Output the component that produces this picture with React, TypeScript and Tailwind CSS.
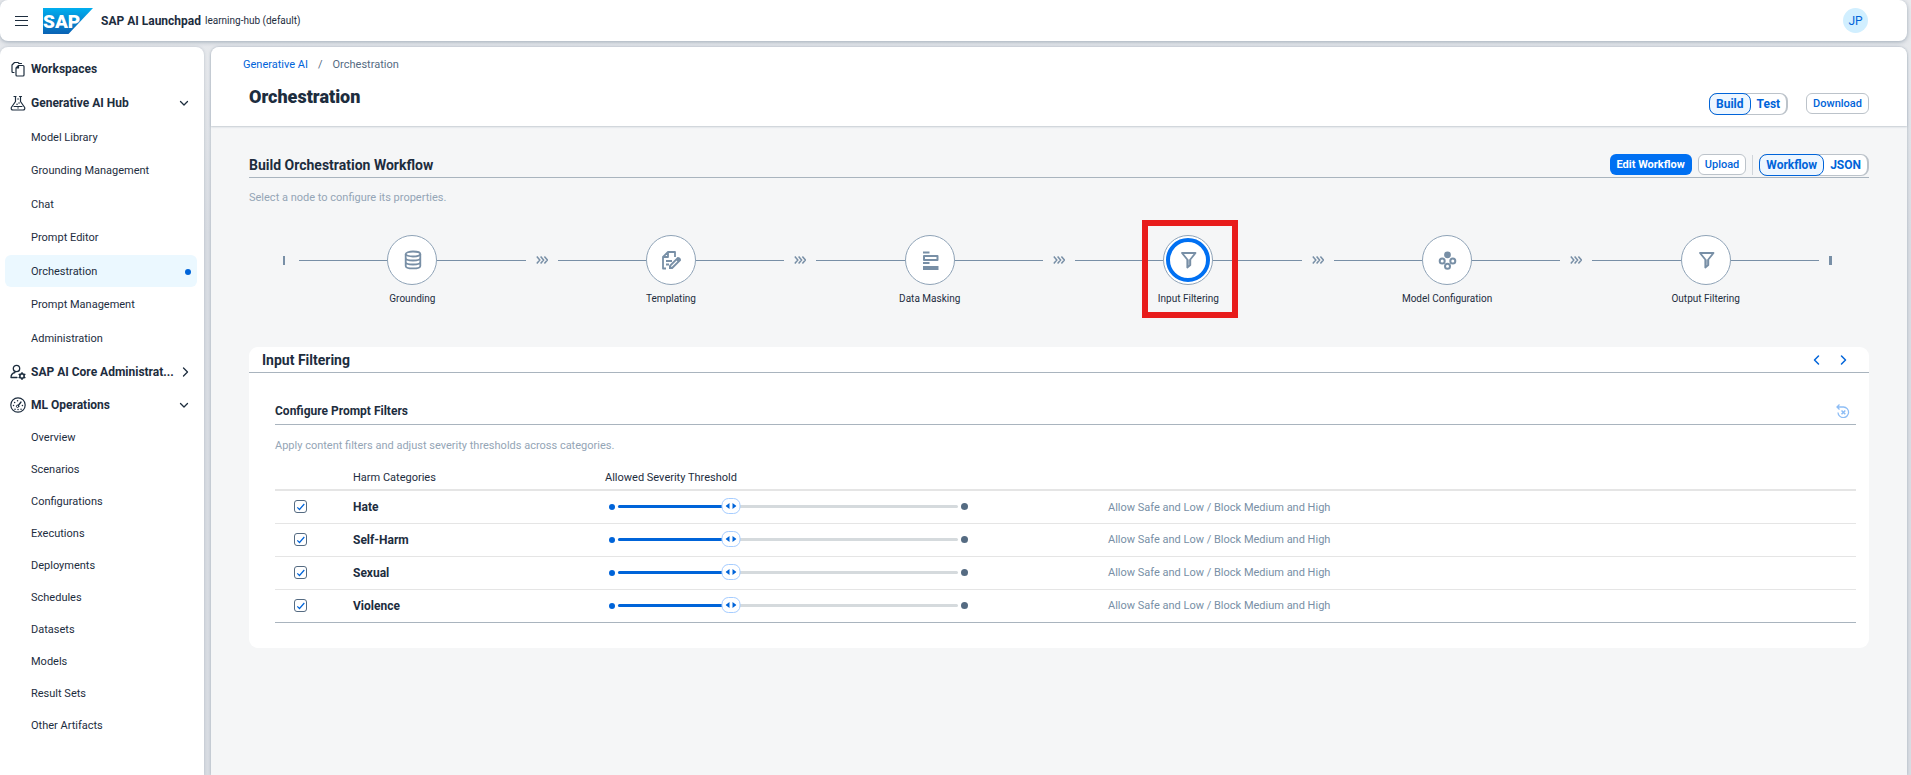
import { useState, type ReactNode } from "react";

const CORE_ITEMS = [
  "Model Library",
  "Grounding Management",
  "Chat",
  "Prompt Editor",
  "Orchestration",
  "Prompt Management",
  "Administration",
];

const ML_ITEMS = [
  "Overview",
  "Scenarios",
  "Configurations",
  "Executions",
  "Deployments",
  "Schedules",
  "Datasets",
  "Models",
  "Result Sets",
  "Other Artifacts",
];

const CATEGORIES = ["Hate", "Self-Harm", "Sexual", "Violence"];

function Chevron({ dir, className }: { dir: "down" | "left" | "right"; className?: string }) {
  const d = dir === "down" ? "M2.5 4.5 6 8l3.5-3.5" : dir === "left" ? "M7.5 2 3.500 6l4 4" : "M4.500 2 8.500 6l-4 4";
  return (
    <svg viewBox="0 0 12 12" className={className} fill="none" stroke="currentColor" strokeLinecap="round" strokeLinejoin="round">
      <path d={d} />
    </svg>
  );
}

function SapLogo() {
  return (
    <svg viewBox="0 0 50 26" className="h-[26px] w-[50px]" role="img" aria-label="SAP">
      <defs>
        <linearGradient id="sap" x1="0" y1="0" x2="0" y2="1">
          <stop offset="0" stopColor="#00aeef" />
          <stop offset="1" stopColor="#0a62b4" />
        </linearGradient>
      </defs>
      <path d="M0 0h50L25.500 26H0z" fill="url(#sap)" />
      <text x="0" y="20" fontFamily="Roboto" fontWeight="900" fontSize="19" fill="#fff">
        SAP
      </text>
    </svg>
  );
}

function IconBase({ children }: { children: ReactNode }) {
  return (
    <svg viewBox="0 0 16 16" className="h-4 w-4 shrink-0" fill="none" stroke="currentColor" strokeLinecap="round" strokeLinejoin="round">
      {children}
    </svg>
  );
}

const WorkspacesIcon = () => (
  <IconBase>
    <path d="M4 11.500H3Q2 11.500 2 10.500V4L4.500 1.500H8Q9 1.500 9 2.500" strokeWidth="1.200" />
    <path d="M6 7 8.500 4.500H13Q14 4.500 14 5.500V14Q14 15 13 15H7Q6 15 6 14zM6 7H8.500V4.500M9 2.500H11.500" strokeWidth="1.200" />
  </IconBase>
);

const FlaskIcon = () => (
  <IconBase>
    <path d="M4 1.500H6M9.500 1.500H11.500M5.500 1.500V6.500L1.300 12.500Q.8 15 3 15H13Q15.200 15 14.700 12.500L10.500 6.500V1.500M4 11.500H12" strokeWidth="1.200" />
    <path d="M7 9.200h.1M9 8h.1M8 4h.1M8 12.900h.1" strokeWidth="1.400" />
  </IconBase>
);

const AdminIcon = () => (
  <IconBase>
    <circle cx="6.500" cy="4.500" r="3.200" strokeWidth="1.300" />
    <path d="M7 13.500H1Q1 9.500 5 8.500" strokeWidth="1.300" />
    <circle cx="12" cy="12" r="2.200" strokeWidth="1.400" />
    <path d="M12 8.700v1M12 14.300v1M9.200 10.400l.8.500M14 13.100l.8.500M9.200 13.600l.8-.5M14 10.900l.8-.5" strokeWidth="1.500" />
  </IconBase>
);

const GaugeIcon = () => (
  <IconBase>
    <circle cx="8" cy="8" r="7.200" strokeWidth="1.200" />
    <path d="M8.300 8.500 11 5" strokeWidth="1.300" />
    <circle cx="7.600" cy="9.300" r="1.200" />
    <path d="M3.500 8.500h.1M4.600 5.500h.1M7.500 3.800h.1M12.400 8.500h.1M5 12.200h.1M8 12.500h.1M11 12.200h.1" strokeWidth="1.400" />
  </IconBase>
);

function NavHeading({ icon, label, dir }: { icon: ReactNode; label: string; dir?: "down" | "right" }) {
  return (
    <button type="button" className="flex h-8 w-full items-center gap-[5px] pr-[14px] pl-[10px] text-left text-xs font-bold whitespace-nowrap">
      {icon}
      <span className="flex-1">{label}</span>
      {dir && <Chevron dir={dir} className="h-3 w-3 shrink-0 stroke-[1.3]" />}
    </button>
  );
}

function NavItem({ label, active }: { label: string; active?: boolean }) {
  return (
    <li>
      <a
        href="#"
        aria-current={active ? "page" : undefined}
        className={
          active
            ? "mr-[7px] ml-[5px] flex h-8 items-center justify-between rounded-md bg-[#ebf8ff] pt-px pr-[6px] pl-[26px] text-[11px] leading-[18px]"
            : "mr-[7px] ml-[5px] flex h-8 items-center justify-between rounded-md pt-px pr-[6px] pl-[26px] text-[11px] leading-[18px]"
        }
      >
        {label}
        {active && <span className="h-[6px] w-[6px] rounded-full bg-[#0064d9]" />}
      </a>
    </li>
  );
}

function Segmented({ options, value, onChange }: { options: string[]; value: string; onChange: (v: string) => void }) {
  return (
    <div className="flex h-[22px] rounded-lg border border-r-2 border-[#bcc3ca] bg-white text-xs font-bold">
      {options.map((o) => (
        <button
          key={o}
          type="button"
          aria-pressed={o === value}
          onClick={() => onChange(o)}
          className={
            o === value
              ? "-my-px -ml-px rounded-lg border border-[#0064d9] bg-[#edf6ff] px-[6px] text-[#0064d9]"
              : "px-[6px] text-[#0064d9]"
          }
        >
          {o}
        </button>
      ))}
    </div>
  );
}

const NodeSvg = ({ children }: { children: ReactNode }) => (
  <svg viewBox="0 0 20 20" className="h-5 w-5" fill="none" stroke="currentColor" strokeWidth="1.800" strokeLinejoin="round">
    {children}
  </svg>
);

const DatabaseIcon = () => (
  <NodeSvg>
    <ellipse cx="11" cy="4" rx="7.300" ry="2.500" />
    <path d="M3.700 4v12c0 3.300 14.600 3.300 14.600 0V4M3.700 8c0 3.300 14.600 3.300 14.600 0M3.700 12c0 3.300 14.600 3.300 14.600 0" />
  </NodeSvg>
);

const TemplateIcon = () => (
  <NodeSvg>
    <path d="M5 18.500H2V7L7 2h7v5M2 7h5V2M5 11h6M5 14.500h3" />
    <path d="M8 19v-3.500l8.500-8.500q3.500 0 3.500 3.500L11.500 19z" fill="currentColor" stroke="none" />
    <path d="m10.300 16.700 5.700-5.700" stroke="#fff" strokeWidth="1.100" />
  </NodeSvg>
);

const MaskIcon = () => (
  <NodeSvg>
    <path d="M3 2.500h6.500M3 13h6.500" strokeWidth="2" />
    <path d="M4 6h13.500v4H4z" strokeWidth="2" />
    <path d="M3 16h15.500v4H3z" fill="currentColor" stroke="none" />
  </NodeSvg>
);

const FunnelIcon = () => (
  <NodeSvg>
    <path d="M4 3h13.500l-5.200 6.500v5.500l-3 2.500V9.500z" strokeWidth="1.800" />
    <path d="M11 9.500v6.500" strokeWidth="1.300" />
  </NodeSvg>
);

const ModelIcon = () => (
  <NodeSvg>
    <circle cx="10.500" cy="4.800" r="3.400" fill="currentColor" stroke="none" />
    <circle cx="5.200" cy="11" r="2.500" strokeWidth="2" />
    <circle cx="15.800" cy="11" r="2.500" strokeWidth="2" />
    <circle cx="10.500" cy="16.300" r="2.500" strokeWidth="2" />
  </NodeSvg>
);

const NODES: { label: string; icon: ReactNode }[] = [
  { label: "Grounding", icon: <DatabaseIcon /> },
  { label: "Templating", icon: <TemplateIcon /> },
  { label: "Data Masking", icon: <MaskIcon /> },
  { label: "Input Filtering", icon: <FunnelIcon /> },
  { label: "Model Configuration", icon: <ModelIcon /> },
  { label: "Output Filtering", icon: <FunnelIcon /> },
];

function FlowNode({ label, icon, active }: { label: string; icon: ReactNode; active: boolean }) {
  return (
    <li className="flex flex-1 items-center">
      <span className="mt-px h-px flex-1 bg-[#788fa6]" />
      <button type="button" className="relative flex h-[50px] w-[50px] items-center justify-center rounded-full border border-[#8fa3b7] bg-white p-[2px] text-[#788fa6]">
        <span
          className={
            active
              ? "flex h-full w-full items-center justify-center rounded-full border-4 border-[#0070f2]"
              : "flex h-full w-full items-center justify-center rounded-full"
          }
        >
          {icon}
        </span>
        <span className="absolute top-full left-1/2 mt-[7px] -translate-x-1/2 text-[10px] leading-4 whitespace-nowrap text-[#1d2d3e]">{label}</span>
        {active && <span className="pointer-events-none absolute -top-4 -left-[22px] h-[98px] w-[96px] border-[6px] border-[#e81c1c]" />}
      </button>
      <span className="mt-px h-px flex-1 bg-[#788fa6]" />
    </li>
  );
}

function FlowArrow() {
  return (
    <li aria-hidden="true" className="flex w-8 justify-center text-[#788fa6]">
      <svg viewBox="0 0 12 8" className="h-2 w-3" fill="none" stroke="currentColor" strokeWidth="1.500">
        <path d="m.8.5 3 3.500-3 3.500M4.600.5l3 3.500-3 3.500M8.400.5l3 3.500-3 3.500" />
      </svg>
    </li>
  );
}

function SeveritySlider({ label }: { label: string }) {
  const [value, setValue] = useState(1);
  const share = (value / 3) * 100;
  return (
    <div className="relative ml-1 flex h-4 w-[359px] items-center gap-[3px]">
      <span className="h-[6px] w-[6px] shrink-0 rounded-full bg-[#0064d9]" />
      <span className="relative h-[3px] flex-1 rounded-full bg-[#d5dadd]">
        <span className="absolute inset-y-0 left-0 rounded-full bg-[#0064d9]" style={{ width: `${share}%` }} />
        <span
          className="absolute -top-[7px] flex h-4 w-[19px] -translate-x-1/2 items-center justify-center rounded-[7px] border border-[#a6cdff] bg-white text-[#0064d9]"
          style={{ left: `${share}%` }}
        >
          <svg viewBox="0 0 11 6" className="h-[6px] w-[11px]" fill="currentColor">
            <path d="M4 0v6L0 3zM7 0v6l4-3z" />
          </svg>
        </span>
      </span>
      <span className="h-[7px] w-[7px] shrink-0 rounded-full bg-[#556b82]" />
      <input
        type="range"
        min={0}
        max={3}
        value={value}
        onChange={(e) => setValue(Number(e.target.value))}
        aria-label={`${label} severity threshold`}
        className="absolute inset-0 w-full cursor-pointer opacity-0"
      />
    </div>
  );
}

function CategoryRow({ name, last }: { name: string; last: boolean }) {
  const [on, setOn] = useState(true);
  const id = `filter-${name}`;
  return (
    <tr className={last ? "h-[33px] border-b border-[#a9b4be]" : "h-[33px] border-b border-[#e5e5e5]"}>
      <td className="pl-[19px]">
        <span className="grid h-[13px] w-[13px]">
          <input
            id={id}
            type="checkbox"
            checked={on}
            onChange={() => setOn(!on)}
            className="col-start-1 row-start-1 h-[13px] w-[13px] appearance-none rounded-[3px] border border-[#556b82] bg-white"
          />
          {on && (
            <svg viewBox="0 0 13 13" className="pointer-events-none col-start-1 row-start-1 h-[13px] w-[13px]" fill="none" stroke="#0064d9" strokeWidth="1.200">
              <path d="m3.300 7.300 2.200 2.200 4.800-5.500" />
            </svg>
          )}
        </span>
      </td>
      <td className="text-xs font-bold">
        <label htmlFor={id}>{name}</label>
      </td>
      <td>
        <SeveritySlider label={name} />
      </td>
      <td className="pt-[2px] text-[11px] text-[#788fa6]">Allow Safe and Low / Block Medium and High</td>
    </tr>
  );
}

export default function App() {
  const [mode, setMode] = useState("Build");
  const [view, setView] = useState("Workflow");

  return (
    <div className="flex min-h-screen flex-col overflow-x-hidden bg-gradient-to-b from-[#e9ebee] to-[#d8dce2] to-30% pr-1 font-['Roboto','Liberation_Sans',sans-serif] text-[#1d2d3e]">
      <header className="flex h-[41px] items-center rounded-lg bg-white pr-[39px] pl-[15px] shadow-[0_1px_4px_rgba(85,107,130,0.5)]">
        <button type="button" aria-label="Menu" className="mr-[15px]">
          <svg viewBox="0 0 13 10" className="h-[10px] w-[13px]" stroke="currentColor">
            <path d="M0 .5h13M0 4.500h13M0 9.500h13" />
          </svg>
        </button>
        <SapLogo />
        <span className="ml-2 text-xs font-bold">SAP AI Launchpad</span>
        <span className="ml-1 text-[10px]">learning-hub (default)</span>
        <span className="ml-auto flex h-[25px] w-[25px] items-center justify-center rounded-full bg-[#d1efff] text-xs text-[#0064d9]">JP</span>
      </header>

      <div className="mt-[6px] flex flex-1 gap-[7px]">
        <nav className="w-[204px] shrink-0 rounded-t-lg bg-white pt-[6px] shadow-[0_0_3px_rgba(85,107,130,0.3)]">
          <div className="flex flex-col gap-[2px]">
            <NavHeading icon={<WorkspacesIcon />} label="Workspaces" />
            <NavHeading icon={<FlaskIcon />} label="Generative AI Hub" dir="down" />
            <ul className="flex h-[233px] flex-col justify-between">
              {CORE_ITEMS.map((i) => (
                <NavItem key={i} label={i} active={i === "Orchestration"} />
              ))}
            </ul>
            <div>
              <NavHeading icon={<AdminIcon />} label="SAP AI Core Administrat..." dir="right" />
              <div className="mt-px">
                <NavHeading icon={<GaugeIcon />} label="ML Operations" dir="down" />
              </div>
              <ul>
                {ML_ITEMS.map((i) => (
                  <NavItem key={i} label={i} />
                ))}
              </ul>
            </div>
          </div>
        </nav>

        <main className="min-w-0 flex-1 rounded-t-lg bg-[#f5f6f7] shadow-[0_0_3px_rgba(85,107,130,0.4)]">
          <div className="h-[79px] rounded-t-lg bg-white pt-[10px] pr-[38px] pl-8 shadow-[0_1px_2px_rgba(85,107,130,0.3)]">
            <nav aria-label="Breadcrumb" className="flex gap-[10px] text-[11px] leading-4 text-[#556b82]">
              <a href="#" className="text-[#0064d9]">
                Generative AI
              </a>
              <span>/</span>
              <span>Orchestration</span>
            </nav>
            <div className="flex justify-between pl-[6px]">
              <h1 className="mt-3 text-lg leading-6 font-black">Orchestration</h1>
              <div className="mt-5 flex gap-[18px]">
                <Segmented options={["Build", "Test"]} value={mode} onChange={setMode} />
                <button type="button" className="h-[21px] rounded-md border border-[#bcc3ca] bg-white px-[6px] text-[11px] leading-[18px] font-medium text-[#0064d9]">
                  Download
                </button>
              </div>
            </div>
          </div>

          <section className="px-[38px]">
            <div className="flex items-center justify-between border-b border-[#a9b4be] pt-[27px] pb-px">
              <h2 className="text-sm leading-[22px] font-bold">Build Orchestration Workflow</h2>
              <div className="flex h-[23px] items-center gap-[6px]">
                <button type="button" className="h-[21px] rounded-md bg-[#0070f2] px-[7px] text-[11px] leading-[18px] font-bold text-white">
                  Edit Workflow
                </button>
                <button type="button" className="h-[21px] rounded-md border border-[#bcc3ca] bg-white px-[6px] text-[11px] leading-[18px] font-medium text-[#0064d9]">
                  Upload
                </button>
                <span className="h-5 w-px bg-[#d0d5da]" />
                <Segmented options={["Workflow", "JSON"]} value={view} onChange={setView} />
              </div>
            </div>
            <p className="mt-3 text-[11px] leading-4 text-[#94a5b6]">Select a node to configure its properties.</p>

            <ol className="mt-[29px] mr-[37px] ml-[34px] flex items-center">
              <li aria-hidden="true" className="mr-[14px] h-[9px] w-[2px] bg-[#788fa6]" />
              {NODES.flatMap((n, i) => {
                const node = <FlowNode key={n.label} label={n.label} icon={n.icon} active={n.label === "Input Filtering"} />;
                return i === 0 ? [node] : [<FlowArrow key={`${n.label}-arrow`} />, node];
              })}
              <li aria-hidden="true" className="ml-[10px] h-[9px] w-[3px] bg-[#788fa6]" />
            </ol>

            <div className="mt-[62px] rounded-[9px] bg-white pb-[25px]">
              <div className="flex h-[26px] items-center justify-between border-b border-[#a9b4be] pr-5 pl-[13px]">
                <h2 className="text-sm leading-5 font-bold">Input Filtering</h2>
                <div className="flex gap-[14px] text-[#0064d9]">
                  <button type="button" aria-label="Previous node">
                    <Chevron dir="left" className="h-3 w-3 stroke-[1.5]" />
                  </button>
                  <button type="button" aria-label="Next node">
                    <Chevron dir="right" className="h-3 w-3 stroke-[1.5]" />
                  </button>
                </div>
              </div>

              <div className="pr-[13px] pl-[26px]">
                <div className="mt-[25px] flex h-[27px] items-center justify-between border-b border-[#a9b4be] pr-[6px]">
                  <h3 className="text-xs font-bold">Configure Prompt Filters</h3>
                  <button type="button" aria-label="Reset filters" className="text-[#8dbdf5]">
                    <svg viewBox="0 0 14 14" className="h-[14px] w-[14px]" fill="none" stroke="currentColor" strokeWidth="1.300">
                      <path d="M1 3H7.500A5.300 5.300 0 1 1 2 8.500M3.500.5 1 3 3.500 5.500" />
                      <path d="m5.500 6.500 3.800 3.800M9.300 6.500 5.500 10.300" strokeWidth="1.500" />
                    </svg>
                  </button>
                </div>
                <p className="mt-[13px] text-[11px] leading-4 text-[#94a5b6]">Apply content filters and adjust severity thresholds across categories.</p>

                <table className="mt-[11px] w-full table-fixed border-collapse text-left">
                  <colgroup>
                    <col className="w-[78px]" />
                    <col className="w-[252px]" />
                    <col className="w-[503px]" />
                    <col />
                  </colgroup>
                  <thead>
                    <tr className="h-[25px] border-b-2 border-[#e5e5e5] text-[11px]">
                      <th aria-label="Enabled" />
                      <th className="pt-[2px] font-normal">Harm Categories</th>
                      <th className="pt-[2px] font-normal">Allowed Severity Threshold</th>
                      <th aria-label="Effect" />
                    </tr>
                  </thead>
                  <tbody>
                    {CATEGORIES.map((c, i) => (
                      <CategoryRow key={c} name={c} last={i === CATEGORIES.length - 1} />
                    ))}
                  </tbody>
                </table>
              </div>
            </div>
          </section>
        </main>
      </div>
    </div>
  );
}
